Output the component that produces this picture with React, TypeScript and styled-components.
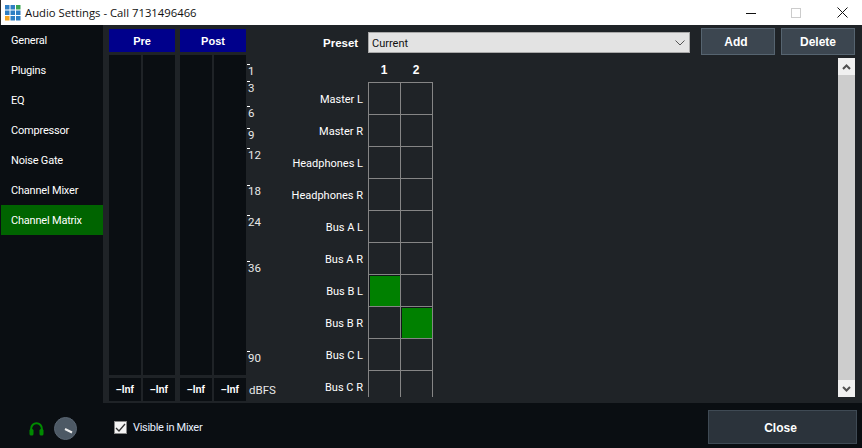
import React from "react";
import styled, { createGlobalStyle } from "styled-components";

const Global = createGlobalStyle`
  html, body { margin: 0; padding: 0; background: #0a0e12; }
  #root { width: 862px; height: 448px; overflow: hidden; }
`;

const UI = `Roboto, "Liberation Sans", sans-serif`;
const BOLD = `"Liberation Sans", Arial, sans-serif`;

const Window = styled.div`
  width: 862px; height: 448px; display: flex; flex-direction: column;
  background: #0a0e12; font-family: ${UI}; color: #fff;
`;
const TitleBar = styled.div`
  height: 25px; flex: none; background: #fff; display: flex; align-items: center;
  padding-left: 4px; border-left: 1px solid #2a2a2a; box-sizing: border-box; gap: 5px;
`;
const TitleText = styled.span`
  margin-left: -1px; font: 11.3px "Open Sans", sans-serif; color: #111; flex: 1; white-space: nowrap;
`;
const WinButton = styled.span<{ $nudge?: boolean }>`
  width: 40px; height: 25px; display: flex; align-items: center; justify-content: center; flex: none;
  box-sizing: border-box; padding-right: ${(p) => (p.$nudge ? "2px" : "0")};
`;
const Middle = styled.div`
  flex: none; height: 378px; display: flex;
`;
const Sidebar = styled.nav`
  width: 103px; flex: none; display: flex; flex-direction: column; padding-left: 1px; box-sizing: border-box;
`;
const NavItem = styled.div<{ $active?: boolean }>`
  height: 30px; flex: none; display: flex; align-items: center; padding: 1px 0 0 10px;
  font-size: 11px; letter-spacing: -0.2px; color: #fff; background: ${(p) => (p.$active ? "#006400" : "transparent")};
  box-sizing: border-box;
`;
const Panel = styled.div`
  flex: 1; background: #1f2327; display: flex; min-width: 0; position: relative; padding-left: 6px;
`;
const MeterGroup = styled.div<{ $gap?: boolean }>`
  width: 66px; flex: none; margin-right: ${(p) => (p.$gap ? "5px" : "0")}; padding-top: 4px;
  display: flex; flex-direction: column;
`;
const MeterHeader = styled.div`
  height: 23px; flex: none; background: #00008b; display: flex; align-items: center; justify-content: center;
  font: bold 11px ${BOLD}; color: #fff;
`;
const MeterBars = styled.div`
  margin-top: 3px; height: 320px; flex: none; display: flex; gap: 2px;
`;
const Bar = styled.div`
  flex: 1; background: #0a0e12;
`;
const MeterValues = styled.div`
  margin-top: 3px; height: 23px; flex: none; display: flex; gap: 2px;
`;
const Value = styled.div`
  flex: 1; background: #0a0e12; display: flex; align-items: center; justify-content: center;
  font: bold 10px ${BOLD}; color: #fff;
`;
const Scale = styled.div`
  width: 36px; flex: none; position: relative;
`;
const Tick = styled.span<{ $top: number }>`
  position: absolute; left: 1px; top: ${(p) => p.$top}px; width: 3px; height: 1px; background: #fff;
`;
const ScaleLabel = styled.span<{ $top: number; $left?: number }>`
  position: absolute; left: ${(p) => p.$left ?? 2}px; top: ${(p) => p.$top}px; font-size: 11.5px; line-height: 14px; color: #e8e8e8;
`;
const Content = styled.div`
  flex: 1; display: flex; flex-direction: column; min-width: 0; padding: 3px 7px 0 0;
`;
const PresetRow = styled.div`
  height: 27px; flex: none; display: flex; align-items: center;
`;
const PresetLabel = styled.span`
  width: 75px; flex: none; margin-left: 11px; padding: 2px 0 0 30px; box-sizing: border-box;
  font: bold 11.5px ${BOLD}; color: #fff; white-space: nowrap;
`;
const Select = styled.div`
  width: 322px; height: 21px; flex: none; margin-top: 2px; background: #e3e3e3; border: 1px solid #a9a9a9; box-sizing: border-box;
  display: flex; align-items: center; justify-content: space-between; padding: 1px 4px 0 3px;
  font-size: 11px; color: #111;
`;
const ToolButton = styled.button<{ $first?: boolean }>`
  width: 74px; height: 27px; flex: none; margin-left: ${(p) => (p.$first ? "11px" : "6px")};
  background: #3c4650; border: 1px solid #566470; box-sizing: border-box; color: #fff;
  font: bold 12px ${BOLD}; padding: 0 ${(p) => (p.$first ? "4px" : "0")} 0 0;
`;
const MatrixBody = styled.div`
  margin-top: 3px; height: 339px; flex: none; display: flex;
`;
const MatrixScroll = styled.div`
  flex: 1; overflow: hidden;
`;
const ColHeads = styled.div`
  height: 24px; display: flex; padding-left: 86px; align-items: center;
`;
const ColHead = styled.div`
  width: 32px; text-align: center; font: bold 12px ${BOLD}; color: #fff;
`;
const Row = styled.div`
  height: 32px; display: flex;
`;
const RowLabel = styled.div`
  width: 86px; flex: none; text-align: right; padding-right: 5px; font-size: 11px; line-height: 36px;
  box-sizing: border-box; color: #fff; white-space: nowrap;
`;
const Cell = styled.div<{ $on?: boolean; $last?: boolean }>`
  width: ${(p) => (p.$last ? "33px" : "32px")}; height: 32px; flex: none; box-sizing: border-box;
  border-top: 1px solid #858585; border-left: 1px solid #858585;
  border-right: ${(p) => (p.$last ? "1px solid #858585" : "0")};
  padding: 1px;
  background: ${(p) => (p.$on ? "#12161a" : "transparent")};
  &::after { content: ""; display: block; width: 30px; height: 30px; background: ${(p) => (p.$on ? "#008000" : "transparent")}; }
`;
const Scrollbar = styled.div`
  width: 17px; flex: none; background: #f0f0f0; display: flex; flex-direction: column;
`;
const ScrollBtn = styled.div`
  height: 17px; flex: none; display: flex; align-items: center; justify-content: center;
`;
const Thumb = styled.div`
  flex: 1; background: #cdcdcd;
`;
const Footer = styled.div`
  flex: 1; display: flex; align-items: center; min-height: 0; padding-top: 3px; box-sizing: border-box;
`;
const FooterIcons = styled.div`
  width: 114px; flex: none; display: flex; align-items: center; padding: 3px 0 0 29px; gap: 10px; box-sizing: border-box;
`;
const Knob = styled.div`
  width: 23px; height: 23px; border-radius: 50%; background: #4d5965; border: 1px solid #5a6673; box-sizing: border-box; flex: none;
`;
const Check = styled.span`
  width: 13px; height: 13px; background: #f4f4f4; border: 1px solid #888; box-sizing: border-box;
  display: flex; align-items: center; justify-content: center; flex: none;
`;
const CheckLabel = styled.label`
  display: flex; align-items: center; gap: 6px; font-size: 11px; letter-spacing: -0.3px; color: #e8f0ff; flex: 1; padding-top: 1px;
`;
const CloseButton = styled.button`
  width: 149px; height: 34px; margin-right: 5px; flex: none; background: #2b333b; border: 1px solid #3f4a54; box-sizing: border-box;
  color: #fff; font: bold 12px ${BOLD}; padding: 2px 4px 0 0;
`;

const nav = ["General", "Plugins", "EQ", "Compressor", "Noise Gate", "Channel Mixer", "Channel Matrix"];
const ticks: [string, number, number][] = [
  ["1", 39, 39], ["3", 56, 56], ["6", 81, 81], ["9", 103, 103], ["12", 123, 123],
  ["18", 160, 159], ["24", 190, 190], ["36", 236, 236], ["90", 326, 326],
];
const rows = ["Master L", "Master R", "Headphones L", "Headphones R", "Bus A L", "Bus A R", "Bus B L", "Bus B R", "Bus C L", "Bus C R"];

const Meter = ({ title, gap }: { title: string; gap?: boolean }) => (
  <MeterGroup $gap={gap}>
    <MeterHeader>{title}</MeterHeader>
    <MeterBars><Bar /><Bar /></MeterBars>
    <MeterValues><Value>–Inf</Value><Value>–Inf</Value></MeterValues>
  </MeterGroup>
);

export default function App() {
  return (
    <Window>
      <Global />
      <TitleBar>
        <svg width="16" height="16" viewBox="0 0 16 16">
          {[0, 1, 2].map((y) => [0, 1, 2].map((x) => (
            <rect key={`${x}${y}`} x={x * 5.5} y={y * 5.5} width="4.5" height="4.5"
              fill={y === 0 && x === 2 ? "#3aa655" : y === 2 && x === 0 ? "#f5a623" : "#2f7fc4"} />
          )))}
        </svg>
        <TitleText>Audio Settings - Call 7131496466</TitleText>
        <WinButton $nudge>
          <svg width="10" height="10"><path d="M0 5.5H10" stroke="#111" /></svg>
        </WinButton>
        <WinButton $nudge>
          <svg width="10" height="10"><rect x=".5" y=".5" width="9" height="9" fill="none" stroke="#ccc" /></svg>
        </WinButton>
        <WinButton>
          <svg width="11" height="11"><path d="M.5 .5L10.5 10.5M10.5 .5L.5 10.5" stroke="#111" /></svg>
        </WinButton>
      </TitleBar>
      <Middle>
        <Sidebar>
          {nav.map((n) => <NavItem key={n} $active={n === "Channel Matrix"}>{n}</NavItem>)}
        </Sidebar>
        <Panel>
          <Meter title="Pre" gap />
          <Meter title="Post" />
          <Scale>
            {ticks.map(([l, t, lt]) => (
              <React.Fragment key={l}>
                <Tick $top={t} />
                <ScaleLabel $top={lt}>{l}</ScaleLabel>
              </React.Fragment>
            ))}
            <ScaleLabel $top={358} $left={3}>dBFS</ScaleLabel>
          </Scale>
          <Content>
            <PresetRow>
              <PresetLabel>Preset</PresetLabel>
              <Select>
                Current
                <svg width="10" height="6"><path d="M.5 .5L5 5L9.5 .5" fill="none" stroke="#555" /></svg>
              </Select>
              <ToolButton $first>Add</ToolButton>
              <ToolButton>Delete</ToolButton>
            </PresetRow>
            <MatrixBody>
              <MatrixScroll>
                <ColHeads><ColHead>1</ColHead><ColHead>2</ColHead></ColHeads>
                {rows.map((r, i) => (
                  <Row key={r}>
                    <RowLabel>{r}</RowLabel>
                    <Cell $on={i === 6} />
                    <Cell $on={i === 7} $last />
                  </Row>
                ))}
              </MatrixScroll>
              <Scrollbar>
                <ScrollBtn>
                  <svg width="9" height="6"><path d="M1 5L4.5 1.5L8 5" fill="none" stroke="#505050" strokeWidth="2" /></svg>
                </ScrollBtn>
                <Thumb />
                <ScrollBtn>
                  <svg width="9" height="6"><path d="M1 1L4.5 4.5L8 1" fill="none" stroke="#505050" strokeWidth="2" /></svg>
                </ScrollBtn>
              </Scrollbar>
            </MatrixBody>
          </Content>
        </Panel>
      </Middle>
      <Footer>
        <FooterIcons>
          <svg width="15" height="14" viewBox="0 0 15 14">
            <path d="M2.2 9V6.5a5.3 5.3 0 0 1 10.6 0V9" fill="none" stroke="#008a00" strokeWidth="2" />
            <rect x="0.5" y="7" width="4" height="6.5" rx="1.5" fill="#008a00" />
            <rect x="10.5" y="7" width="4" height="6.5" rx="1.5" fill="#008a00" />
          </svg>
          <Knob>
            <svg width="21" height="21" style={{ display: "block" }}><path d="M10 11L17 14.5" stroke="#eee" strokeWidth="2" /></svg>
          </Knob>
        </FooterIcons>
        <CheckLabel>
          <Check>
            <svg width="11" height="9"><path d="M1 5L4 8L10 1" fill="none" stroke="#333" strokeWidth="1.3" /></svg>
          </Check>
          Visible in Mixer
        </CheckLabel>
        <CloseButton>Close</CloseButton>
      </Footer>
    </Window>
  );
}
